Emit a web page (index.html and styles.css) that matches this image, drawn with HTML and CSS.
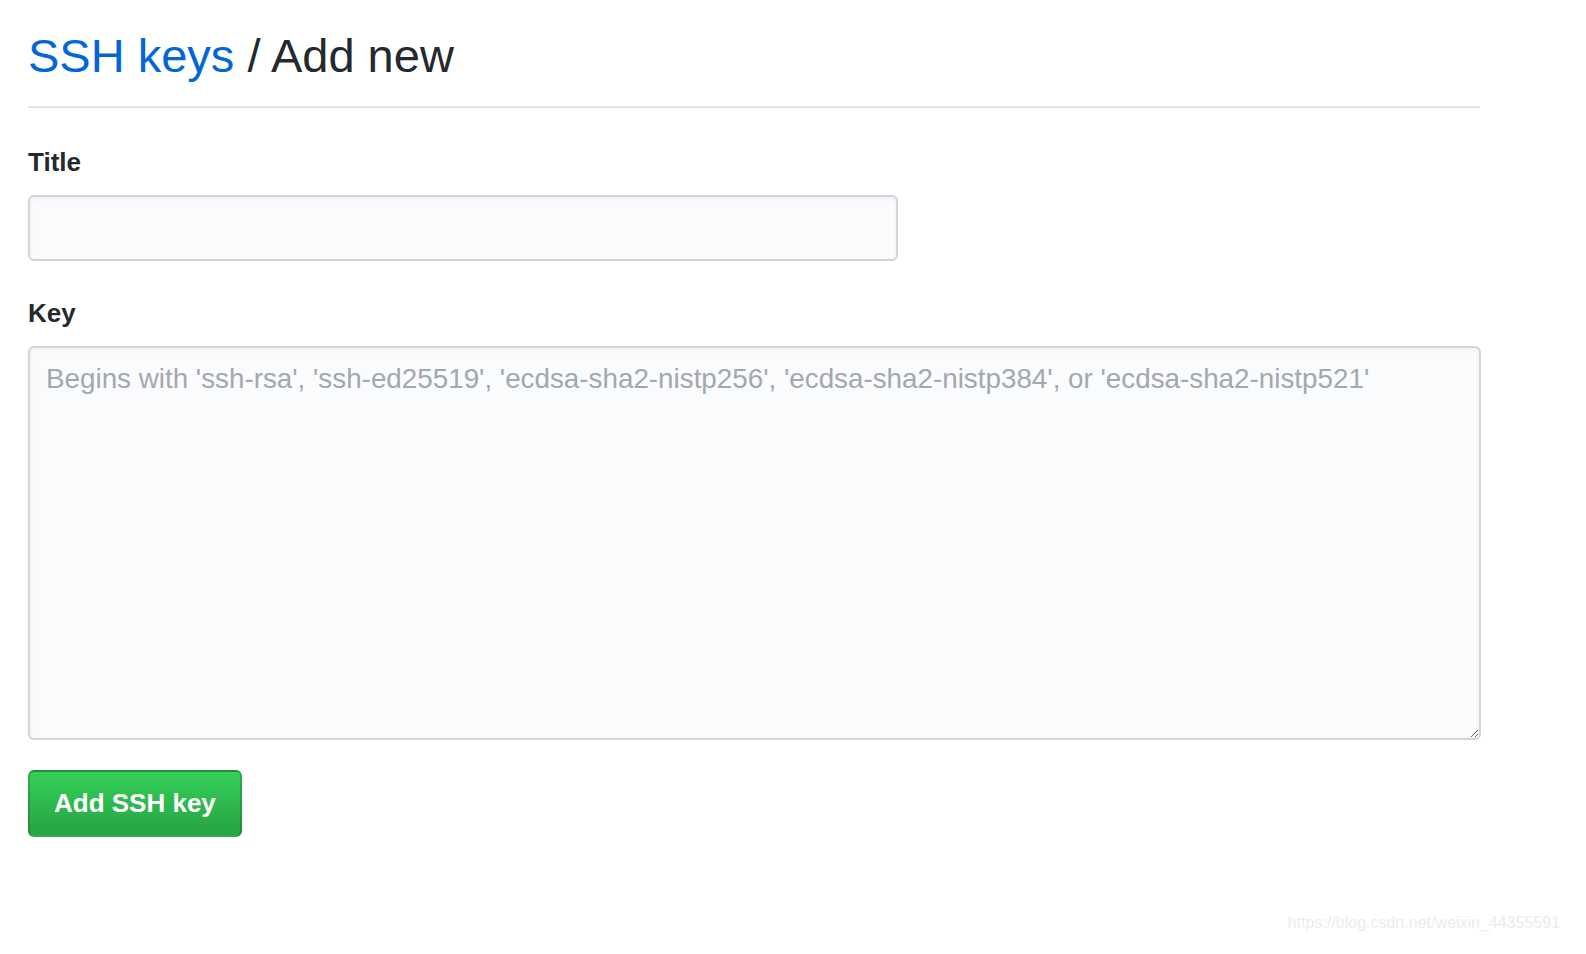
FILE: index.html
```html
<!DOCTYPE html>
<html>
<head>
    <title>SSH keys / Add new</title>
    <link rel="stylesheet" href="styles.css">
</head>
<body>
    <div class="page">
        <div class="subhead">
            <h2><a href="#">SSH keys</a> / Add new</h2>
        </div>

        <form class="key-form" onsubmit="return false;">
            <div class="form-group">
                <label for="keyTitle">Title</label>
                <input type="text" id="keyTitle" class="title-input">
            </div>
            <div class="form-group">
                <label for="keyBody">Key</label>
                <textarea id="keyBody" class="key-input" placeholder="Begins with 'ssh-rsa', 'ssh-ed25519', 'ecdsa-sha2-nistp256', 'ecdsa-sha2-nistp384', or 'ecdsa-sha2-nistp521'"></textarea>
            </div>
            <button type="submit" class="btn-primary">Add SSH key</button>
        </form>
    </div>

    <div class="watermark">https://blog.csdn.net/weixin_44355591</div>
</body>
</html>
```

FILE: styles.css
```css
body {
    margin: 0;
    font-family: "Liberation Sans", Arial, sans-serif;
    color: #24292e;
    background-color: #fff;
}

.page {
    width: 1452px;
    padding: 26px 0 0 28px;
}

.subhead {
    border-bottom: 2px solid #e1e4e8;
    padding-bottom: 20px;
}

.subhead h2 {
    margin: 0;
    font-size: 47px;
    font-weight: normal;
    line-height: 60px;
}

.subhead a {
    color: #0366d6;
    text-decoration: none;
}

.key-form {
    padding-top: 36px;
}

.form-group {
    margin-bottom: 34px;
}

.form-group:last-of-type {
    margin-bottom: 30px;
}

label {
    display: block;
    font-size: 26px;
    font-weight: bold;
    line-height: 36px;
    margin-bottom: 15px;
}

.title-input,
.key-input {
    display: block;
    box-sizing: border-box;
    background-color: #fafbfc;
    border: 2px solid #d1d5da;
    border-radius: 6px;
    box-shadow: inset 0 2px 4px rgba(27, 31, 35, 0.05);
    font-family: "Liberation Sans", Arial, sans-serif;
    font-size: 27.8px;
    color: #24292e;
    outline: none;
}

.title-input {
    width: 870px;
    height: 66px;
    padding: 0 16px;
}

.key-input {
    width: 1453px;
    height: 394px;
    padding: 10px 16px;
    line-height: 1.5;
    resize: vertical;
}

.key-input::placeholder {
    color: #a3a8ae;
}

.btn-primary {
    height: 67px;
    padding: 0 24px;
    border: 2px solid rgba(27, 31, 35, 0.2);
    border-radius: 6px;
    background-color: #28a745;
    background-image: linear-gradient(-180deg, #34d058 0%, #28a745 90%);
    color: #fff;
    font-family: "Liberation Sans", Arial, sans-serif;
    font-size: 26px;
    font-weight: bold;
    cursor: pointer;
}

.watermark {
    position: absolute;
    right: 26px;
    top: 914px;
    font-size: 16px;
    color: #ececec;
}
```
